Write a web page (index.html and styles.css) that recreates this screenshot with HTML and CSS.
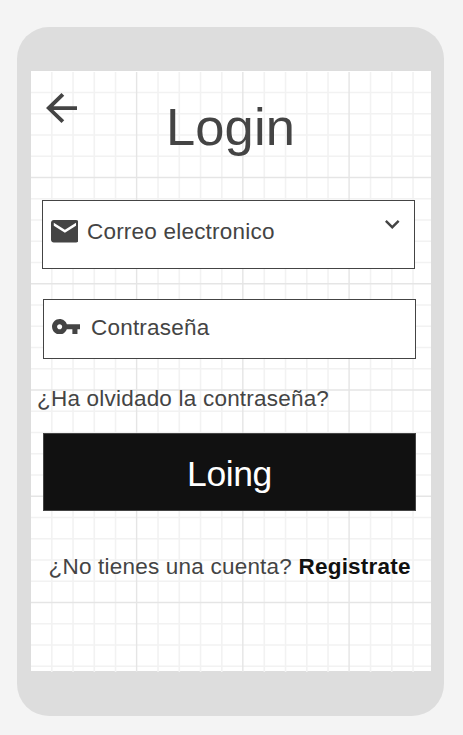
FILE: index.html
```html
<!DOCTYPE html>
<html lang="es">
<head>
<meta charset="utf-8">
<title>Login</title>
<link rel="stylesheet" href="styles.css">
</head>
<body>
<main class="phone">
  <div class="screen">
    <svg class="paper" viewBox="0 0 400 601" aria-hidden="true">
      <path class="minor" d="M20.8 1v600M42.05 1v600M63.3 1v600M84.55 1v600M127.05 1v600M148.3 1v600M169.55 1v600M190.8 1v600M233.3 1v600M254.55 1v600M275.8 1v600M297.05 1v600M339.55 1v600M360.8 1v600M382.05 1v600"/>
      <path class="minor" d="M0 21.5h400M0 42.75h400M0 64h400M0 85.25h400M0 127.75h400M0 149h400M0 170.25h400M0 191.5h400M0 234h400M0 255.25h400M0 276.5h400M0 297.75h400M0 340.25h400M0 361.5h400M0 382.75h400M0 404h400M0 446.5h400M0 467.75h400M0 489h400M0 510.25h400M0 552.75h400M0 574h400M0 595.25h400"/>
      <path class="major" d="M105.6 1v600M211.85 1v600M318.1 1v600M0 106.5h400M0 212.75h400M0 319h400M0 425.25h400M0 531.5h400"/>
    </svg>
    <div class="content">
      <header class="header">
        <svg class="back" viewBox="4 4 16 16" preserveAspectRatio="none"><path d="M20 11H7.83l5.59-5.59L12 4l-8 8 8 8 1.41-1.41L7.83 13H20z"/></svg>
        <h1 class="title">Login</h1>
      </header>
      <div class="field email">
        <svg class="mail" viewBox="2 4 20 16" preserveAspectRatio="none"><path d="M20 4H4c-1.1 0-1.99.9-1.99 2L2 18c0 1.1.9 2 2 2h16c1.1 0 2-.9 2-2V6c0-1.1-.9-2-2-2zm0 4l-8 5-8-5V6l8 5 8-5z"/></svg>
        <span class="label">Correo electronico</span>
        <svg class="chevron" viewBox="6 8.59 12 7.41" preserveAspectRatio="none"><path d="M16.59 8.59L12 13.17 7.41 8.59 6 10l6 6 6-6z"/></svg>
      </div>
      <div class="field password">
        <svg class="key" viewBox="1 6 22 12" preserveAspectRatio="none"><path d="M12.65 10C11.83 7.67 9.61 6 7 6c-3.31 0-6 2.69-6 6s2.69 6 6 6c2.61 0 4.83-1.67 5.65-4H17v4h4v-4h2v-4zM7 14c-1.1 0-2-.9-2-2s.9-2 2-2 2 .9 2 2-.9 2-2 2z"/></svg>
        <span class="label">Contraseña</span>
      </div>
      <p class="forgot">¿Ha olvidado la contraseña?</p>
      <button class="submit">Loing</button>
      <p class="signup">¿No tienes una cuenta? <b>Registrate</b></p>
    </div>
  </div>
</main>
</body>
</html>
```

FILE: styles.css
```css
* { box-sizing: border-box; }
body {
  margin: 0;
  padding: 26.5px 0 0 17px;
  height: 735px;
  background: #f4f4f4;
  color: #444;
  font: 22.5px/26px "Liberation Sans", Arial, sans-serif;
  letter-spacing: 0.21px;
}
.phone {
  width: 427.3px;
  height: 689.5px;
  padding: 44.5px 0 0 14px;
  border-radius: 32px;
  background: #ddd;
}
.screen {
  display: grid;
  width: 400px;
  height: 600px;
  background: #fff;
}
.paper, .content { grid-area: 1 / 1; }
.paper { width: 400px; height: 601px; fill: none; }
.minor { stroke: #f2f2f2; stroke-width: 1.6; }
.major { stroke: #e5e5e5; stroke-width: 1.4; }
.content {
  display: flex;
  flex-direction: column;
  z-index: 1;
}
svg { display: block; flex: none; fill: #444; }
.header {
  display: flex;
  height: 129px;
  padding: 22px 0 0 15px;
}
.back { width: 31px; height: 30px; }
.title {
  margin: 4px 0 0 89px;
  font-size: 52.5px;
  font-weight: 400;
  line-height: 60px;
  letter-spacing: 0.1px;
}
.field {
  display: flex;
  align-items: flex-start;
  width: 373px;
  background: #fff;
  border: 1px solid #444;
}
.email { height: 69px; margin-left: 11px; padding: 18px 14.5px 0 7.7px; }
.password { height: 60px; margin: 30px 0 0 12px; padding: 15px 0 0 8px; }
.mail { width: 27.8px; height: 22.5px; margin-top: 1px; }
.key { width: 28px; height: 15.5px; margin-top: 3.6px; }
.email .label { margin-left: 8.5px; }
.password .label { margin-left: 11px; }
.chevron { width: 14.5px; height: 9px; margin: 1px 0 0 auto; }
.forgot { margin: 27px 0 0 6px; white-space: nowrap; }
.submit {
  width: 373px;
  height: 78px;
  margin: 21px 0 0 12px;
  padding: 3px 0 0 0;
  border: 1px solid #444;
  background: #111;
  color: #fff;
  font: 35.5px/40px "Liberation Sans", Arial, sans-serif;
  letter-spacing: -0.4px;
}
.signup { margin: 43px 0 0 17.5px; white-space: nowrap; }
.signup b { color: #111; }
```
